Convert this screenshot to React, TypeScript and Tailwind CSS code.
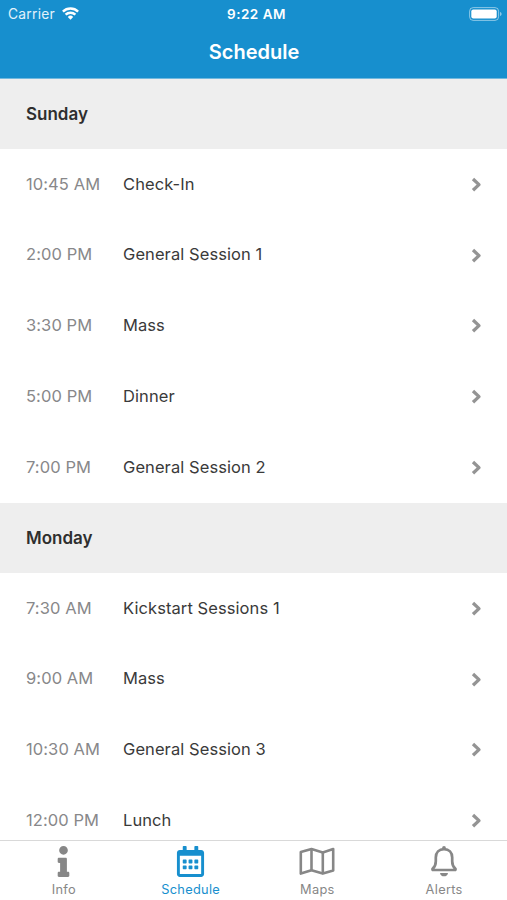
import type { ReactNode } from "react";
import { FaInfo, FaRegCalendarAlt } from "react-icons/fa";

interface Session {
  time: string;
  title: string;
}

interface Day {
  name: string;
  sessions: Session[];
}

const days: Day[] = [
  {
    name: "Sunday",
    sessions: [
      { time: "10:45 AM", title: "Check-In" },
      { time: "2:00 PM", title: "General Session 1" },
      { time: "3:30 PM", title: "Mass" },
      { time: "5:00 PM", title: "Dinner" },
      { time: "7:00 PM", title: "General Session 2" },
    ],
  },
  {
    name: "Monday",
    sessions: [
      { time: "7:30 AM", title: "Kickstart Sessions 1" },
      { time: "9:00 AM", title: "Mass" },
      { time: "10:30 AM", title: "General Session 3" },
      { time: "12:00 PM", title: "Lunch" },
    ],
  },
];

function WifiIcon() {
  return (
    <svg width="17" height="13" viewBox="0 0 17 13" fill="none" stroke="white" strokeWidth="2.4">
      <path d="M0.9 4.7a10.8 10.8 0 0 1 15.2 0" />
      <path d="M3.6 7.7a7 7 0 0 1 9.8 0" />
      <path d="M8.5 12.7 5.8 9.9a3.8 3.8 0 0 1 5.4 0z" fill="white" stroke="none" />
    </svg>
  );
}

function BatteryIcon() {
  return (
    <svg width="33" height="14" viewBox="0 0 33 14" fill="none">
      <rect x="0.6" y="0.6" width="29" height="12.8" rx="3.6" stroke="white" strokeOpacity="0.5" />
      <rect x="2.3" y="2.4" width="25.4" height="9.2" rx="2" fill="white" />
      <path d="M31 5v4c1-.3 1.6-1.1 1.6-2S32 5.3 31 5z" fill="white" fillOpacity="0.5" />
    </svg>
  );
}

function ChevronIcon() {
  return (
    <svg width="11" height="15" viewBox="0 0 11 15" fill="none" stroke="#949494" strokeWidth="3.3">
      <path d="M2 2 8 7.6l-6 5.6" strokeLinejoin="round" />
    </svg>
  );
}

function MapIcon() {
  return (
    <svg
      width="36"
      height="31"
      viewBox="0 0 36 31"
      fill="none"
      stroke="currentColor"
      strokeWidth="2.6"
      strokeLinejoin="round"
    >
      <path d="M1.8 6 12.5 3l11.3 3.4L34.2 3v21.4l-10.4 3.2-11.3-3.4-10.7 3.4z" />
      <path d="M12.5 3v21.2M23.8 6.4v21.2" />
    </svg>
  );
}

function BellIcon() {
  return (
    <svg width="28" height="31" viewBox="0 0 28 31" fill="none">
      <path
        d="M14 3.2c-5 0-8.2 3.4-8.2 8.4v3.6c0 3.600-1.300 5.800-3 7.300-.8.8-.3 1.500.6 1.500h21.200c.9 0 1.400-.7.6-1.500-1.700-1.500-3-3.700-3-7.300v-3.600c0-5-3.200-8.400-8.200-8.400z"
        stroke="currentColor"
        strokeWidth="2.7"
        strokeLinejoin="round"
      />
      <circle cx="14" cy="2" r="1.9" fill="currentColor" />
      <path d="M10 26.900h8c-.3 2.100-1.900 3.400-4 3.400s-3.700-1.300-4-3.400z" fill="currentColor" />
    </svg>
  );
}

function Header() {
  return (
    <header className="h-[79px] shrink-0 border-b border-[#72b9de] bg-[#178fce] text-white">
      <div className="grid h-[27px] grid-cols-3 items-center pr-[5px] pl-[8px]">
        <div className="flex items-center gap-[7px] text-[13.8px] tracking-[0.25px] text-[#e2f2fb]">
          <span className="pt-px">Carrier</span>
          <WifiIcon />
        </div>
        <div className="pt-px pl-[3px] text-center text-[13.5px] font-semibold tracking-[0.5px]">9:22 AM</div>
        <div className="flex justify-end">
          <BatteryIcon />
        </div>
      </div>
      <h1 className="pl-px text-center text-[20px] leading-[50px] font-semibold">Schedule</h1>
    </header>
  );
}

function SessionRow({ time, title }: Session) {
  return (
    <li className="flex h-[70.8px] items-center pr-[25px] pb-px pl-[26px] text-[16.5px] tracking-[0.08px]">
      <span className="w-[97px] text-[#88888a]">{time}</span>
      <span className="flex-1 text-[#3a3a3a]">{title}</span>
      <span className="pt-px">
        <ChevronIcon />
      </span>
    </li>
  );
}

interface TabProps {
  label: string;
  active?: boolean;
  children: ReactNode;
}

function Tab({ label, active = false, children }: TabProps) {
  return (
    <button
      className={`flex flex-1 flex-col items-center pt-[5px] pl-px text-[12.8px] leading-4 tracking-[0.3px] ${
        active ? "text-[#178fce]" : "text-[#878787]"
      }`}
    >
      {children}
      <span className="mt-[5px]">{label}</span>
    </button>
  );
}

export default function App() {
  return (
    <div className="flex h-[900px] w-full flex-col overflow-hidden bg-white font-['Inter','Liberation_Sans',sans-serif]">
      <Header />
      <main className="min-h-0 flex-1 overflow-hidden">
        {days.map((day) => (
          <section key={day.name}>
            <h2 className="flex h-[70px] items-center bg-[#eeeeee] pt-px pl-[26px] text-[17px] font-semibold text-[#2e2e2e]">
              {day.name}
            </h2>
            <ul>
              {day.sessions.map((session) => (
                <SessionRow key={session.time} {...session} />
              ))}
            </ul>
          </section>
        ))}
      </main>
      <nav className="flex h-[60px] shrink-0 border-t border-[#d9d9d9] bg-white">
        <Tab label="Info">
          <FaInfo size={31} />
        </Tab>
        <Tab label="Schedule" active>
          <FaRegCalendarAlt size={31} />
        </Tab>
        <Tab label="Maps">
          <MapIcon />
        </Tab>
        <Tab label="Alerts">
          <BellIcon />
        </Tab>
      </nav>
    </div>
  );
}
